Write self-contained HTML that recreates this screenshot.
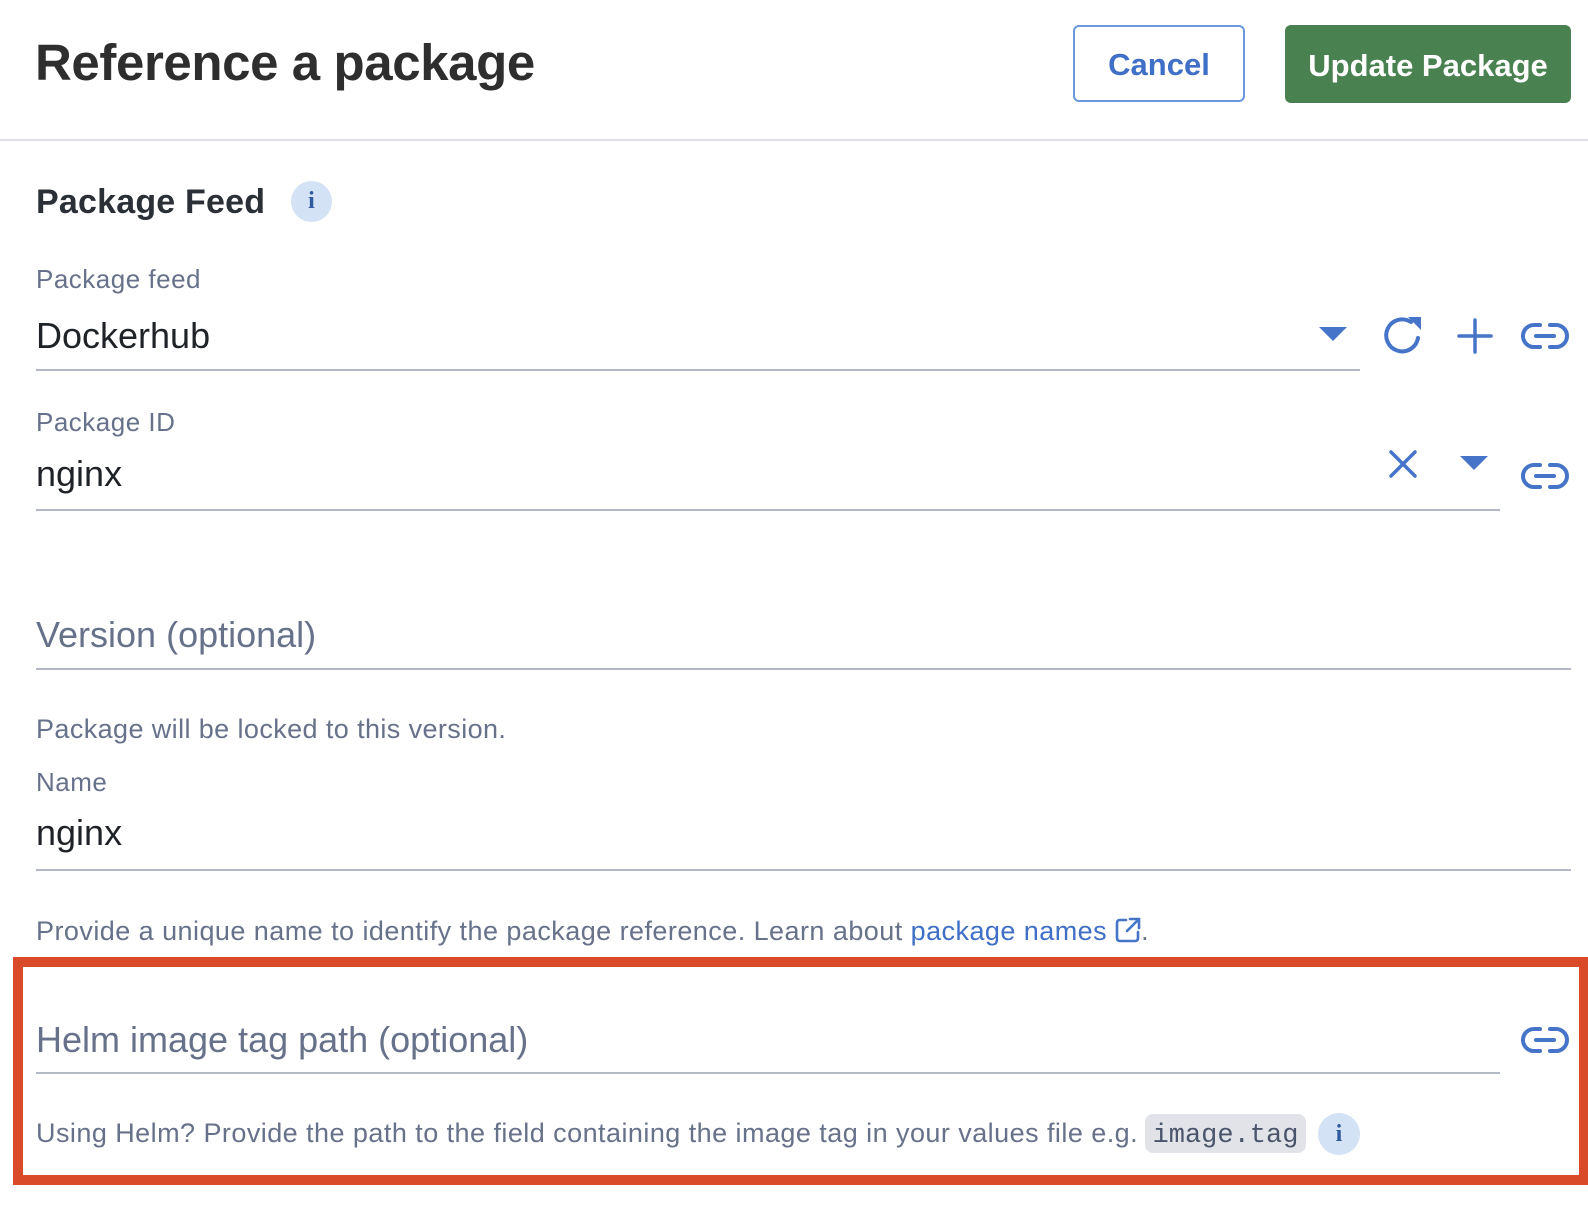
<!DOCTYPE html>
<html><head><meta charset="utf-8"><style>
html,body{margin:0;padding:0;background:#fff;width:1588px;height:1214px;overflow:hidden;position:relative;font-family:"Liberation Sans",sans-serif}
.t{position:absolute;white-space:nowrap;line-height:1}
.g{color:#67718a}
.d{color:#1f2328}
.s{font-size:27px;letter-spacing:0.45px}
.u{position:absolute;height:2px;background:#b3b8c6;left:36px}
svg{position:absolute;overflow:visible}
svg.il{position:static;vertical-align:-3px}
</style></head><body>
<div class="t" style="left:35px;top:37px;font-size:51px;font-weight:bold;color:#2e2e2e;letter-spacing:-0.4px">Reference a package</div>
<div style="position:absolute;left:1073px;top:25px;width:172px;height:77px;border:2px solid #6a98dd;border-radius:6px;box-sizing:border-box;color:#3f6fc6;font-weight:bold;font-size:31px;text-align:center;line-height:75px">Cancel</div>
<div style="position:absolute;left:1285px;top:25px;width:286px;height:78px;background:#4a8150;border-radius:6px;color:#fff;font-weight:bold;font-size:31px;text-align:center;line-height:81px">Update Package</div>
<div style="position:absolute;left:0;top:139px;width:1588px;height:2px;background:#e0e1e6"></div>

<div class="t" style="left:36px;top:185px;font-size:34px;font-weight:bold;color:#2b2f36;letter-spacing:0.2px">Package Feed</div>
<div style="position:absolute;left:291px;top:181px;width:41px;height:41px;border-radius:50%;background:#d4e2f5;color:#2f5aa0;font-weight:bold;font-size:24px;text-align:center;line-height:41px;font-family:'Liberation Serif',serif">i</div>

<div class="t g" style="left:36px;top:266px;font-size:26px;letter-spacing:0.5px">Package feed</div>
<div class="t d" style="left:36px;top:318px;font-size:36px">Dockerhub</div>
<div class="u" style="top:369px;width:1324px"></div>

<svg width="28" height="14" style="left:1319px;top:327px"><path d="M0 0H28L14 14Z" fill="#4574c8"/></svg>
<svg width="40" height="40" style="left:1383px;top:315px"><path d="M35 23A16 16 0 1 1 28 7" fill="none" stroke="#4574c8" stroke-width="4" stroke-linecap="round"/><path d="M25 2H38V15Z" fill="#4574c8"/></svg>
<svg width="36" height="36" style="left:1457px;top:318px"><path d="M18 2V34M2 18H34" stroke="#4574c8" stroke-width="3.5" stroke-linecap="round"/></svg>
<svg width="48" height="26" style="left:1521px;top:323px"><g fill="none" stroke="#4574c8" stroke-width="4" stroke-linecap="round"><path d="M19 2H13A11 11 0 0 0 13 24H19M29 2H35A11 11 0 0 1 35 24H29M15 13H33"/></g></svg>

<div class="t g" style="left:36px;top:409px;font-size:26px;letter-spacing:0.5px">Package ID</div>
<div class="t d" style="left:36px;top:456px;font-size:36px">nginx</div>
<div class="u" style="top:509px;width:1464px"></div>
<svg width="28" height="28" style="left:1389px;top:450px"><path d="M2 2L26 26M26 2L2 26" stroke="#4574c8" stroke-width="3.5" stroke-linecap="round"/></svg>
<svg width="28" height="14" style="left:1460px;top:456px"><path d="M0 0H28L14 14Z" fill="#4574c8"/></svg>
<svg width="48" height="26" style="left:1521px;top:463px"><g fill="none" stroke="#4574c8" stroke-width="4" stroke-linecap="round"><path d="M19 2H13A11 11 0 0 0 13 24H19M29 2H35A11 11 0 0 1 35 24H29M15 13H33"/></g></svg>

<div class="t g" style="left:36px;top:617px;font-size:36px">Version (optional)</div>
<div class="u" style="top:668px;width:1535px"></div>
<div class="t g" style="left:36px;top:716px;font-size:27px;letter-spacing:0.4px">Package will be locked to this version.</div>
<div class="t g" style="left:36px;top:769px;font-size:26px;letter-spacing:0.5px">Name</div>
<div class="t d" style="left:36px;top:815px;font-size:36px">nginx</div>
<div class="u" style="top:869px;width:1535px"></div>
<div class="t g s" style="left:36px;top:917px">Provide a unique name to identify the package reference. Learn about <span style="color:#3f6fc6">package names</span> <svg class="il" width="26" height="26" viewBox="0 0 26 26"><g fill="none" stroke="#4574c8" stroke-width="2.6" stroke-linecap="round"><path d="M11 3H5Q2 3 2 6V21Q2 24 5 24H20Q23 24 23 21V15M15 2H24V11M24 2L12 14"/></g></svg>.</div>

<div style="position:absolute;left:13px;top:957px;width:1575px;height:228px;border:10px solid #d94b28;border-right-width:9px;box-sizing:border-box"></div>
<div class="t g" style="left:36px;top:1022px;font-size:36px">Helm image tag path (optional)</div>
<div class="u" style="top:1072px;width:1464px"></div>
<svg width="48" height="26" style="left:1521px;top:1027px"><g fill="none" stroke="#4574c8" stroke-width="4" stroke-linecap="round"><path d="M19 2H13A11 11 0 0 0 13 24H19M29 2H35A11 11 0 0 1 35 24H29M15 13H33"/></g></svg>
<div class="t g s" style="left:36px;top:1120px">Using Helm? Provide the path to the field containing the image tag in your values file e.g.</div>
<div style="position:absolute;left:1145px;top:1114px;width:161px;height:39px;background:#e1e3e8;border-radius:8px;color:#4a556b;font-family:'Liberation Mono',monospace;font-size:27px;line-height:45px;text-align:center">image.tag</div>
<div style="position:absolute;left:1318px;top:1113px;width:42px;height:42px;border-radius:50%;background:#d4e2f5;color:#2f5aa0;font-weight:bold;font-size:24px;text-align:center;line-height:42px;font-family:'Liberation Serif',serif">i</div>
</body></html>
